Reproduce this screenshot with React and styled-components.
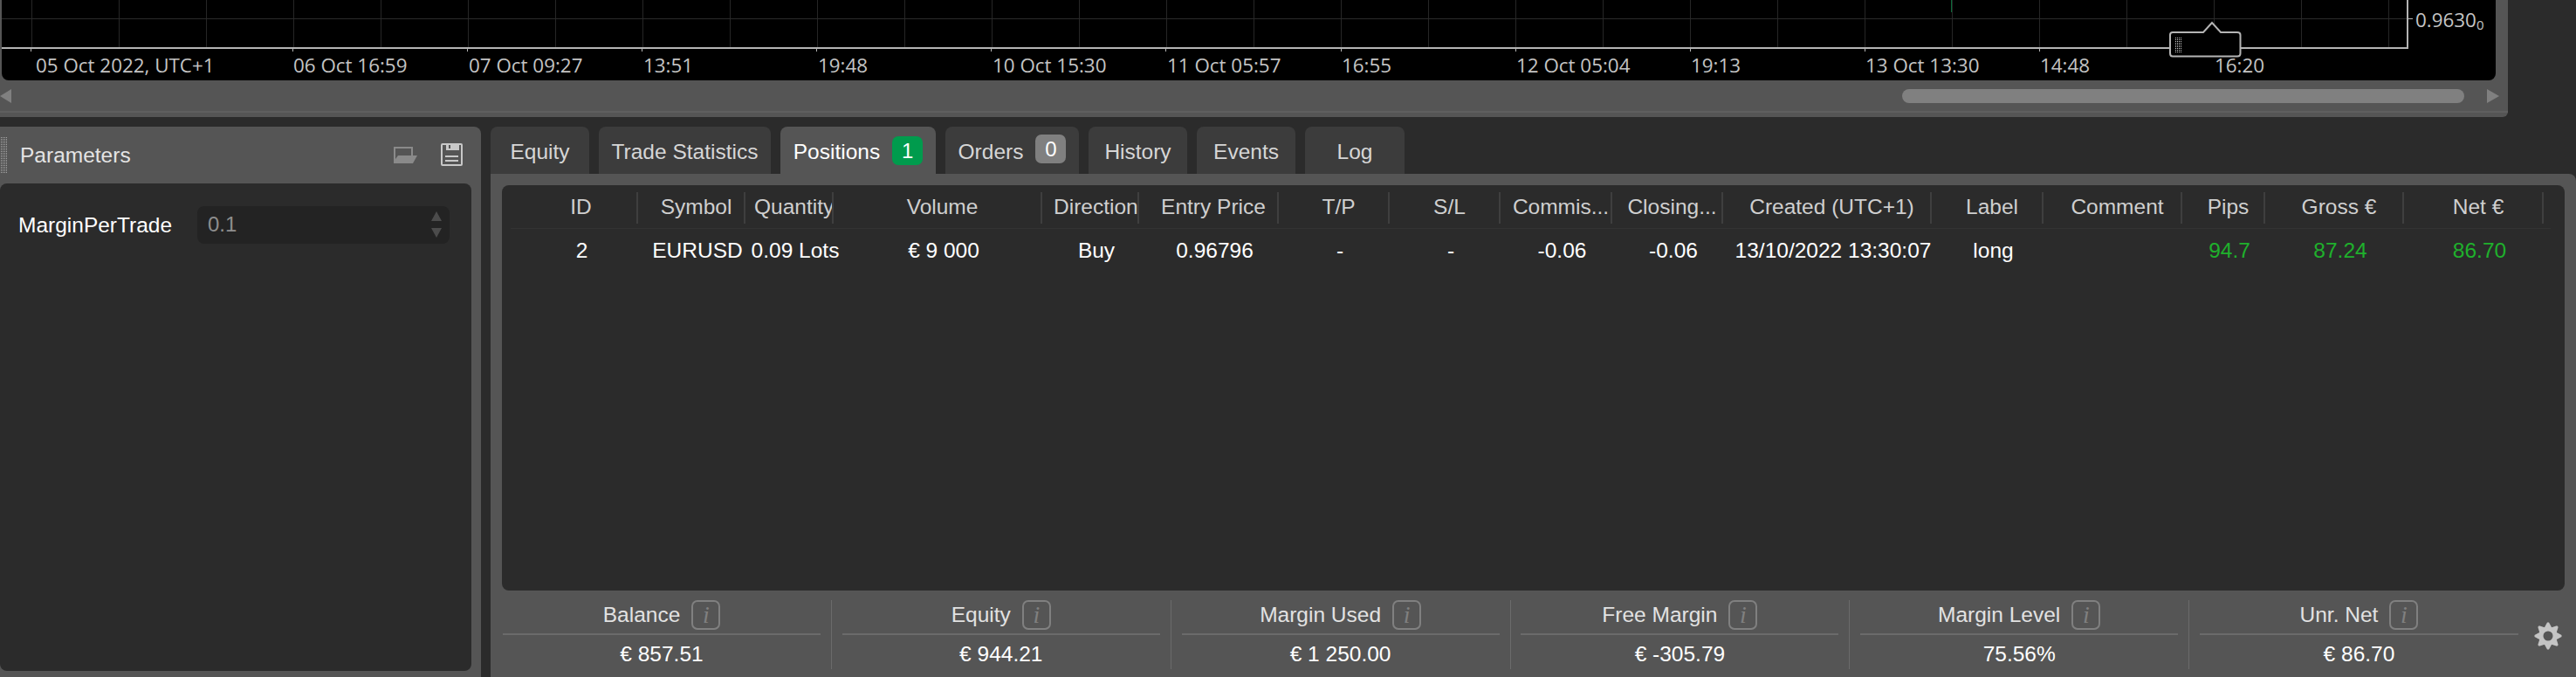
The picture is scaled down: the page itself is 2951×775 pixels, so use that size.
import React from 'react'
import styled, { createGlobalStyle } from 'styled-components'

const GlobalStyle = createGlobalStyle`
  html, body {
    margin: 0;
    padding: 0;
    background: #2b2b2b;
  }
  * {
    box-sizing: border-box;
  }
`

const Page = styled.div`
  width: 2951px;
  height: 775px;
  overflow: hidden;
  display: flex;
  flex-direction: column;
  gap: 11px;
  background: #2b2b2b;
  color: #e0e0e0;
  font-family: "Liberation Sans", Arial, sans-serif;
  font-size: 24px;
`

const ChartPanel = styled.section`
  width: 2873px;
  height: 134px;
  flex: none;
  background: #555;
  border-bottom-right-radius: 6px;
  padding-left: 2px;
  padding-right: 14px;
`

const ChartArea = styled.div`
  height: 92px;
  background: #000;
  border-bottom-left-radius: 8px;
  border-bottom-right-radius: 8px;
  overflow: hidden;
`

const ChartSvg = styled.svg`
  display: block;
  text {
    font-family: "Open Sans", sans-serif;
    font-size: 22.400px;
    fill: #c4c4c4;
  }
`

const ScrollRow = styled.div`
  height: 37px;
  margin-left: -2px;
  margin-right: -14px;
  display: flex;
  align-items: center;
  justify-content: space-between;
  padding: 0 10px 0 0;
  border-bottom: 2px solid #5f5f5f;
`

const ScrollArrow = styled.svg`
  display: block;
  flex: none;
`

const ScrollThumb = styled.div`
  width: 644px;
  height: 16px;
  margin-left: auto;
  margin-right: 26px;
  border-radius: 8px;
  background: #808080;
`

const Workspace = styled.div`
  flex: 1;
  display: flex;
  gap: 11px;
  min-height: 0;
`

const ParamsPanel = styled.aside`
  width: 551px;
  flex: none;
  background: #555;
  border-top-right-radius: 8px;
  display: flex;
  flex-direction: column;
  padding-right: 11px;
  padding-bottom: 7px;
`

const ParamsHeader = styled.header`
  height: 65px;
  flex: none;
  display: flex;
  align-items: center;
  padding: 0 10px 1px 0;
`

const Grip = styled.div`
  width: 8px;
  height: 43px;
  margin-right: 15px;
  flex: none;
  background-image:
    repeating-linear-gradient(90deg, #555 0 1px, transparent 1px 2px),
    repeating-linear-gradient(0deg, #555 0 1px, #a8a8a8 1px 2px);
`

const ParamsTitle = styled.div`
  flex: 1;
  font-size: 24.500px;
  color: #e4e4e4;
  padding-top: 1px;
`

const IconButton = styled.svg`
  display: block;
  flex: none;
  margin-left: ${p => p.$gap}px;
`

const ParamsBody = styled.div`
  flex: 1;
  background: #2b2b2b;
  border-radius: 8px;
  padding: 26px 25px 0 21px;
`

const ParamRow = styled.div`
  display: flex;
  align-items: center;
  justify-content: space-between;
`

const ParamName = styled.label`
  font-size: 24.500px;
  color: #fff;
`

const ParamInput = styled.div`
  position: relative;
  width: 289px;
  height: 43px;
  border-radius: 8px;
  background: #232323;
  color: #8e8e8e;
  display: flex;
  align-items: center;
  padding: 0 0 2px 12px;
`

const Spinner = styled.svg`
  position: absolute;
  right: 9px;
  top: 6px;
`

const TradePanel = styled.main`
  flex: 1;
  display: flex;
  flex-direction: column;
  min-width: 0;
`

const TabBar = styled.nav`
  height: 54px;
  flex: none;
  display: flex;
  gap: 11px;
`

const Tab = styled.div`
  width: ${p => p.$width}px;
  border-radius: 8px 8px 0 0;
  background: ${p => (p.$active ? '#555' : '#3c3c3c')};
  color: ${p => (p.$active ? '#fff' : '#d6d6d6')};
  display: flex;
  align-items: center;
  justify-content: center;
  gap: 14px;
  padding-top: 3px;
  font-size: 24.500px;
`

const Badge = styled.span`
  width: 35px;
  height: 33px;
  border-radius: 7px;
  background: ${p => (p.$positive ? '#009b4d' : '#808080')};
  color: #fff;
  font-size: 24px;
  display: flex;
  align-items: center;
  justify-content: center;
  margin-top: ${p => (p.$positive ? '-2px' : '-6px')};
`

const TabBody = styled.div`
  flex: 1;
  background: #555;
  border-top-right-radius: 8px;
  padding: 13px 13px 0 13px;
  display: flex;
  flex-direction: column;
  min-height: 0;
`

const TableBox = styled.div`
  height: 464px;
  flex: none;
  background: #2b2b2b;
  border-radius: 8px;
  padding: 8px 0 0 10px;
`

const columns =
  '146px 123px 101px 239px 111px 160px 127px 127px 128px 127px 239px 128px 159px 95px 159px 160px'

const HeaderRow = styled.div`
  display: grid;
  grid-template-columns: ${columns};
  height: 42px;
  padding-bottom: 6px;
  border-bottom: 1px solid #333;
  margin-right: 16px;
`

const HeaderCell = styled.div`
  height: 36px;
  line-height: 34px;
  border-right: 2px solid #3f3f3f;
  color: #cfcfcf;
  font-size: 24.500px;
  white-space: nowrap;
  overflow: hidden;
  text-align: ${p => (p.$clipAt ? 'left' : 'center')};
  padding: ${p => (p.$clipAt ? `0 3px 0 ${p.$clipAt}px` : `0 0 0 ${p.$first ? 17 : 12}px`)};
`

const DataRow = styled.div`
  display: grid;
  grid-template-columns: ${columns};
  height: 50px;
  margin-right: 16px;
`

const DataCell = styled.div`
  display: flex;
  align-items: center;
  justify-content: center;
  padding-left: ${p => (p.$first ? 17 : 13)}px;
  padding-bottom: 1px;
  white-space: nowrap;
  color: ${p => (p.$profit ? '#1fb02c' : '#fff')};
  font-size: 24.500px;
`

const StatsBar = styled.div`
  flex: 1;
  display: flex;
  padding-top: 11px;
  padding-left: 1px;
  position: relative;
`

const Stat = styled.div`
  width: 377px;
  height: 79px;
  margin-right: 11.800px;
  padding-right: 12px;
  border-right: ${p => (p.$last ? 'none' : '1px solid #6b6b6b')};
`

const StatLabel = styled.div`
  height: 40px;
  display: flex;
  align-items: flex-start;
  justify-content: center;
  gap: 13px;
  border-bottom: 2px solid #6b6b6b;
  color: #e2e2e2;
  line-height: 34px;
  font-size: 24.500px;
`

const InfoMark = styled.span`
  width: 33px;
  height: 34px;
  border: 2px solid #808080;
  border-radius: 7px;
  color: #808080;
  font-family: "Liberation Serif", serif;
  font-style: italic;
  font-size: 28px;
  display: flex;
  align-items: center;
  justify-content: center;
`

const StatValue = styled.div`
  height: 39px;
  line-height: 44px;
  text-align: center;
  color: #fff;
  font-size: 24.500px;
`

const GearButton = styled.svg`
  position: absolute;
  right: 3px;
  top: 36px;
`

const gridLines = Array.from({ length: 28 }, (_, i) => 36 + i * 100)

const ticks = [
  { x: 35, textX: 41, text: '05 Oct 2022, UTC+1' },
  { x: 335, textX: 336, text: '06 Oct 16:59' },
  { x: 535, textX: 537, text: '07 Oct 09:27' },
  { x: 735, textX: 737, text: '13:51' },
  { x: 935, textX: 937, text: '19:48' },
  { x: 1135, textX: 1137, text: '10 Oct 15:30' },
  { x: 1335, textX: 1337, text: '11 Oct 05:57' },
  { x: 1536, textX: 1537, text: '16:55' },
  { x: 1736, textX: 1737, text: '12 Oct 05:04' },
  { x: 1936, textX: 1937, text: '19:13' },
  { x: 2136, textX: 2137, text: '13 Oct 13:30' },
  { x: 2336, textX: 2337, text: '14:48' },
  { x: 2536, textX: 2537, text: '16:20' }
]

const Chart = () => (
  <ChartSvg width="2857" height="92" viewBox="2 0 2857 92">
    {gridLines.map(x => (
      <line key={x} x1={x + 0.5} y1="0" x2={x + 0.5} y2="54" stroke="#262626" />
    ))}
    <line x1="2" y1="21.500" x2="2758" y2="21.500" stroke="#2a2a2a" />
    <line x1="2235.500" y1="0" x2="2235.500" y2="14" stroke="#0b6b3a" />
    <path d="M2 55H2758V0" fill="none" stroke="#b4b4b4" strokeWidth="2" />
    <line x1="2759" y1="21.500" x2="2764" y2="21.500" stroke="#b4b4b4" />
    {ticks.map(t => (
      <g key={t.text}>
        <line x1={t.x + 0.5} y1="56" x2={t.x + 0.5} y2="59" stroke="#b4b4b4" />
        <text x={t.textX} y="83">{t.text}</text>
      </g>
    ))}
    <text x="2767" y="31">
      0.9630<tspan fontSize="15" dy="3">0</tspan>
    </text>
    <path
      d="M2489 37H2524L2534 26L2544 37H2563Q2566.500 37 2566.500 40V61Q2566.500 64.500 2563 64.500H2489Q2486 64.500 2486 61V40Q2486 37 2489 37Z"
      fill="#000"
      stroke="#b4b4b4"
      strokeWidth="2"
    />
    {[2492, 2494, 2496, 2498].map(x =>
      [43, 45, 47, 49, 51, 53, 55, 57, 59].map(y => (
        <rect key={`${x}-${y}`} x={x} y={y} width="1" height="1" fill="#d0d0d0" />
      ))
    )}
  </ChartSvg>
)

const FolderIcon = () => (
  <IconButton $gap={0} width="27" height="19" viewBox="0 0 27 19">
    <path d="M0 0H22V10H20V2H2V14L5 10H27L22 19H0Z" fill="#8a8a8a" />
  </IconButton>
)

const SaveIcon = () => (
  <IconButton $gap={27} width="25" height="26" viewBox="0 0 25 26">
    <path
      fillRule="evenodd"
      d="M2 0H23Q25 0 25 2V24Q25 26 23 26H2Q0 26 0 24V2Q0 0 2 0ZM2 2V24H23V2Z"
      fill="#c8c8c8"
    />
    <path d="M6 2H9V6H11V2H21V8H6Z" fill="#c8c8c8" />
    <rect x="5" y="14" width="15" height="2" fill="#c8c8c8" />
    <rect x="5" y="19" width="15" height="2" fill="#c8c8c8" />
  </IconButton>
)

const Gear = () => (
  <GearButton width="32" height="32" viewBox="0 0 32 32">
    <g fill="#c4c4c4">
      {[0, 45, 90, 135, 180, 225, 270, 315].map(a => (
        <path key={a} d="M11.500 7L15 0.500H17L20.500 7Z" transform={`rotate(${a} 16 16)`} />
      ))}
    </g>
    <circle cx="16" cy="16" r="8" fill="none" stroke="#c4c4c4" strokeWidth="5" />
  </GearButton>
)

const headers = [
  'ID', 'Symbol', 'Quantity', 'Volume', 'Direction', 'Entry Price', 'T/P', 'S/L',
  'Commis...', 'Closing...', 'Created (UTC+1)', 'Label', 'Comment', 'Pips', 'Gross €', 'Net €'
]

// left inset of the headers that don't fit their column and get cut off
const clipped = { Quantity: 10, Direction: 13 }

const position = [
  '2', 'EURUSD', '0.09 Lots', '€ 9 000', 'Buy', '0.96796', '-', '-',
  '-0.06', '-0.06', '13/10/2022 13:30:07', 'long', '', '94.7', '87.24', '86.70'
]

const profitColumns = [13, 14, 15]

const tabs = [
  { label: 'Equity', width: 113 },
  { label: 'Trade Statistics', width: 197 },
  { label: 'Positions', width: 178, count: 1, active: true },
  { label: 'Orders', width: 153, count: 0 },
  { label: 'History', width: 113 },
  { label: 'Events', width: 113 },
  { label: 'Log', width: 114 }
]

const stats = [
  { label: 'Balance', value: '€ 857.51' },
  { label: 'Equity', value: '€ 944.21' },
  { label: 'Margin Used', value: '€ 1 250.00' },
  { label: 'Free Margin', value: '€ -305.79' },
  { label: 'Margin Level', value: '75.56%' },
  { label: 'Unr. Net', value: '€ 86.70' }
]

const App = () => (
  <Page>
    <GlobalStyle />
    <ChartPanel>
      <ChartArea>
        <Chart />
      </ChartArea>
      <ScrollRow>
        <ScrollArrow width="14" height="16" viewBox="0 0 14 16">
          <path d="M13 0V16L0 8Z" fill="#808080" />
        </ScrollArrow>
        <ScrollThumb />
        <ScrollArrow width="14" height="16" viewBox="0 0 14 16">
          <path d="M0 0V16L14 8Z" fill="#808080" />
        </ScrollArrow>
      </ScrollRow>
    </ChartPanel>

    <Workspace>
      <ParamsPanel>
        <ParamsHeader>
          <Grip />
          <ParamsTitle>Parameters</ParamsTitle>
          <FolderIcon />
          <SaveIcon />
        </ParamsHeader>
        <ParamsBody>
          <ParamRow>
            <ParamName>MarginPerTrade</ParamName>
            <ParamInput>
              0.1
              <Spinner width="12" height="30" viewBox="0 0 12 30">
                <path d="M6 0L12 11H0Z" fill="#4c4c4c" />
                <path d="M0 19H12L6 30Z" fill="#4c4c4c" />
              </Spinner>
            </ParamInput>
          </ParamRow>
        </ParamsBody>
      </ParamsPanel>

      <TradePanel>
        <TabBar>
          {tabs.map(tab => (
            <Tab key={tab.label} $width={tab.width} $active={tab.active}>
              {tab.label}
              {tab.count !== undefined && (
                <Badge $positive={tab.count > 0}>{tab.count}</Badge>
              )}
            </Tab>
          ))}
        </TabBar>
        <TabBody>
          <TableBox>
            <HeaderRow>
              {headers.map((h, i) => (
                <HeaderCell key={h} $first={i === 0} $clipAt={clipped[h]}>
                  {h}
                </HeaderCell>
              ))}
            </HeaderRow>
            <DataRow>
              {position.map((value, i) => (
                <DataCell key={i} $first={i === 0} $profit={profitColumns.includes(i)}>
                  {value}
                </DataCell>
              ))}
            </DataRow>
          </TableBox>
          <StatsBar>
            {stats.map((s, i) => (
              <Stat key={s.label} $last={i === stats.length - 1}>
                <StatLabel>
                  {s.label}
                  <InfoMark>i</InfoMark>
                </StatLabel>
                <StatValue>{s.value}</StatValue>
              </Stat>
            ))}
            <Gear />
          </StatsBar>
        </TabBody>
      </TradePanel>
    </Workspace>
  </Page>
)

export default App
